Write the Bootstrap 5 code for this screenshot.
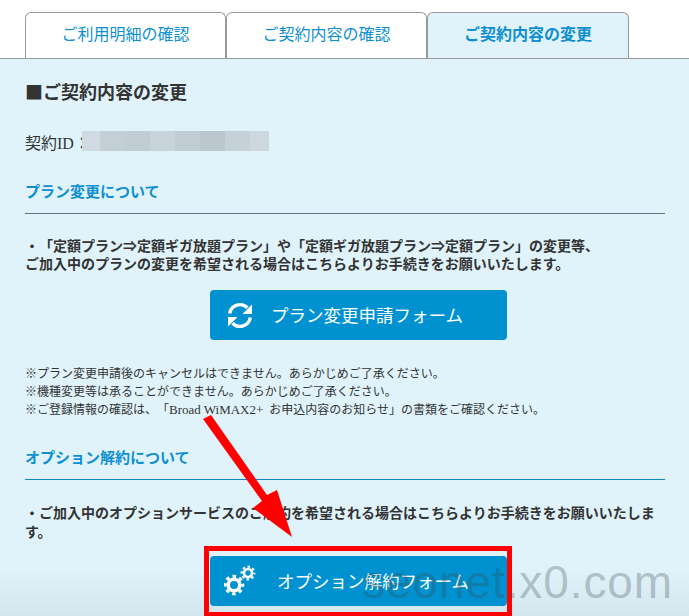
<!DOCTYPE html>
<html lang="ja">
<head>
<meta charset="utf-8">
<title>ご契約内容の変更</title>
<link rel="stylesheet" href="https://cdn.jsdelivr.net/npm/bootstrap@5.3.0/dist/css/bootstrap.min.css">
<style>
html,body{height:616px;overflow:hidden;}
body{position:relative;background:#fff;color:#333;font-family:"Liberation Serif","Noto Sans CJK JP",serif;text-spacing-trim:space-all;}
.tabbar{padding:12px 0 0 25px;height:58px;border:0;}
.tabbar .nav-link{width:201px;height:46px;padding:0;margin:0;background:#fff;border:1px solid #999;border-bottom:0;border-radius:6px 6px 0 0;color:#0e8fd0;font-size:16px;font-weight:400;line-height:44px;text-align:center;}
.tabbar .nav-link.active{width:202px;background:#e0f3fb;color:#0e8fd0;font-weight:700;border-color:#999;}
.pane{height:558px;background:linear-gradient(#e0f3fb 0,#e0f3fb 510px,#d3e5ed 558px);border-top:1px solid #999;padding:0 24px 0 25px;}
.pane-title{font-size:18px;font-weight:700;line-height:24px;margin:20px 0 0;color:#333;}
.square{font-family:"Noto Sans CJK JP",sans-serif;}
.idrow{height:20px;margin-top:26px;font-size:16px;line-height:26px;}
.masked{width:187px;height:20px;background:linear-gradient(90deg,#cfdbe1 0 18px,#c2d0d6 18px 43px,#c0cdd3 43px 68px,#c7d4da 68px 93px,#c0cdd3 93px 118px,#bac7cc 118px 143px,#c4d1d7 143px 168px,#ccd8de 168px);margin-left:-8px;}
.sec-title{font-size:15px;font-weight:700;color:#0e8fd0;line-height:20px;margin:0;padding-bottom:11px;border-bottom:1px solid #666;}
.sec-a{margin-top:31px;border-bottom-color:#5d7480;}
.sec-b{margin-top:29px;border-bottom-color:#1585bd;}
.lead-txt{font-size:14px;font-weight:700;line-height:18px;margin:0;}
.lead-a{margin-top:24px;}
.lead-b{margin-top:25px;line-height:18.5px;}
.form-btn{width:297px;height:50px;background:#0092d0;border:0;border-radius:4px;color:#fff;font-family:"Noto Sans CJK JP",sans-serif;font-size:17.5px;line-height:1;padding:0;}
.form-btn:hover{background:#0092d0;color:#fff;}
.btn-a{margin:16px 0 0 185px;}
.notes{margin:25px 0 0;padding:0;list-style:none;font-size:12px;line-height:18px;}
.latin{font-size:13px;margin-right:3px;}
.frame{width:308px;height:70px;margin:4px 0 0 179px;border:5px solid #f00;border-bottom-width:4px;padding:5px 1px;}
.ico-a{margin-left:18px;margin-right:19px;}
.ico-b{margin-left:14px;margin-right:21px;}
.arrow{position:absolute;left:0;top:0;pointer-events:none;}
.mark-wm{position:absolute;right:16px;top:552px;font-family:"Liberation Sans",sans-serif;font-size:46px;line-height:60px;color:rgba(60,70,75,.3);letter-spacing:.9px;white-space:nowrap;}
</style>
</head>
<body>
<ul class="nav nav-tabs tabbar">
  <li class="nav-item"><a class="nav-link" href="#">ご利用明細の確認</a></li>
  <li class="nav-item"><a class="nav-link" href="#">ご契約内容の確認</a></li>
  <li class="nav-item"><a class="nav-link active" href="#">ご契約内容の変更</a></li>
</ul>
<main class="pane">
  <h1 class="pane-title"><span class="square">■</span>ご契約内容の変更</h1>
  <div class="idrow d-flex"><span>契約ID：</span><div class="masked"></div></div>
  <h2 class="sec-title sec-a">プラン変更について</h2>
  <p class="lead-txt lead-a">・「定額プラン⇒定額ギガ放題プラン」や「定額ギガ放題プラン⇒定額プラン」の変更等、<br>ご加入中のプランの変更を希望される場合はこちらよりお手続きをお願いいたします。</p>
  <a href="#" class="btn form-btn btn-a d-flex align-items-center">
    <svg class="ico-a" width="24" height="27" viewBox="0 0 24 27" aria-hidden="true"><path d="M1.7 11.5A10.5 10.5 0 0 1 19.5 5.8" fill="none" stroke="#fff" stroke-width="3.4"/><path d="M24 2.5V12H14.5Z" fill="#fff"/><path d="M22.3 15.5A10.5 10.5 0 0 1 4.5 21.2" fill="none" stroke="#fff" stroke-width="3.4"/><path d="M0 24.5V15H9.5Z" fill="#fff"/></svg>
    <span>プラン変更申請フォーム</span>
  </a>
  <ul class="notes">
    <li>※プラン変更申請後のキャンセルはできません。あらかじめご了承ください。</li>
    <li>※機種変更等は承ることができません。あらかじめご了承ください。</li>
    <li>※ご登録情報の確認は、「<span class="latin">Broad WiMAX2+</span> お申込内容のお知らせ」の書類をご確認ください。</li>
  </ul>
  <h2 class="sec-title sec-b">オプション解約について</h2>
  <p class="lead-txt lead-b">・ご加入中のオプションサービスのご解約を希望される場合はこちらよりお手続きをお願いいたします。</p>
  <div class="frame">
    <a href="#" class="btn form-btn d-flex align-items-center">
      <svg class="ico-b" width="32" height="32" viewBox="0 0 32 32" aria-hidden="true"><circle cx="10" cy="20" r="5.8" fill="none" stroke="#fff" stroke-width="3.6"/><circle cx="10" cy="20" r="8.8" fill="none" stroke="#fff" stroke-width="3" stroke-dasharray="3.456 3.456" stroke-dashoffset="1.728"/><circle cx="24" cy="8" r="4" fill="none" stroke="#fff" stroke-width="2.6"/><circle cx="24" cy="8" r="6.3" fill="none" stroke="#fff" stroke-width="2.2" stroke-dasharray="2.474 2.474" stroke-dashoffset="1.237"/></svg>
      <span>オプション解約フォーム</span>
    </a>
  </div>
</main>
<svg class="arrow" width="689" height="616" viewBox="0 0 689 616" aria-hidden="true"><path d="M203 419 211 415 267 495 277 490 292 537 253 508 262 501Z" fill="#f00"/></svg>
<div class="mark-wm">seonet.x0.com</div>
<script src="https://cdn.jsdelivr.net/npm/bootstrap@5.3.0/dist/js/bootstrap.bundle.min.js"></script>
</body>
</html>
